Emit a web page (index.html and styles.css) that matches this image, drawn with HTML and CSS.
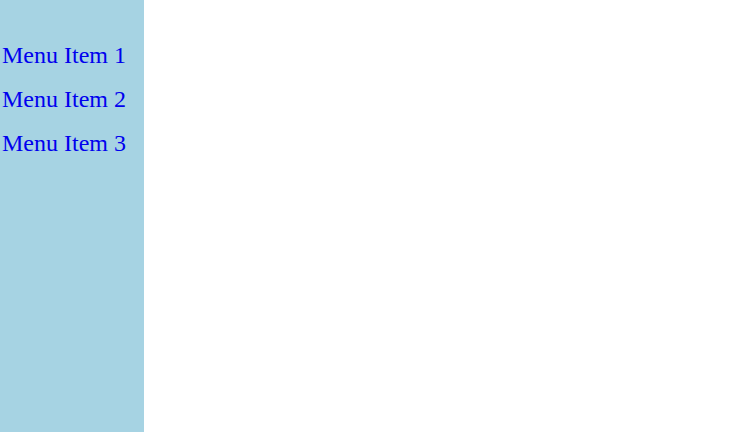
FILE: index.html
```html
<!DOCTYPE html>
<html>
<head>
<meta charset="utf-8">
<link rel="stylesheet" href="styles.css">
</head>
<body>
<div class="layout">
  <nav class="sidebar">
    <ul class="menu">
      <li class="menu-item"><a href="#">Menu Item 1</a></li>
      <li class="menu-item"><a href="#">Menu Item 2</a></li>
      <li class="menu-item"><a href="#">Menu Item 3</a></li>
    </ul>
  </nav>
  <main class="content"></main>
</div>
</body>
</html>
```
FILE: styles.css
```css
html, body {
  margin: 0;
  padding: 0;
  height: 100%;
  background: #ffffff;
  font-family: "Liberation Serif", "Times New Roman", serif;
}
.layout {
  display: flex;
  height: 100%;
}
.sidebar {
  width: 144px;
  flex: none;
  background: #a6d3e3;
  padding-top: 33px;
  box-sizing: border-box;
}
.menu {
  list-style: none;
  margin: 0;
  padding: 0 0 0 2px;
}
.menu-item {
  font-size: 24px;
  line-height: 44px;
}
.menu-item a {
  color: #0000ee;
  text-decoration: none;
}
.content {
  flex: 1;
}
```
